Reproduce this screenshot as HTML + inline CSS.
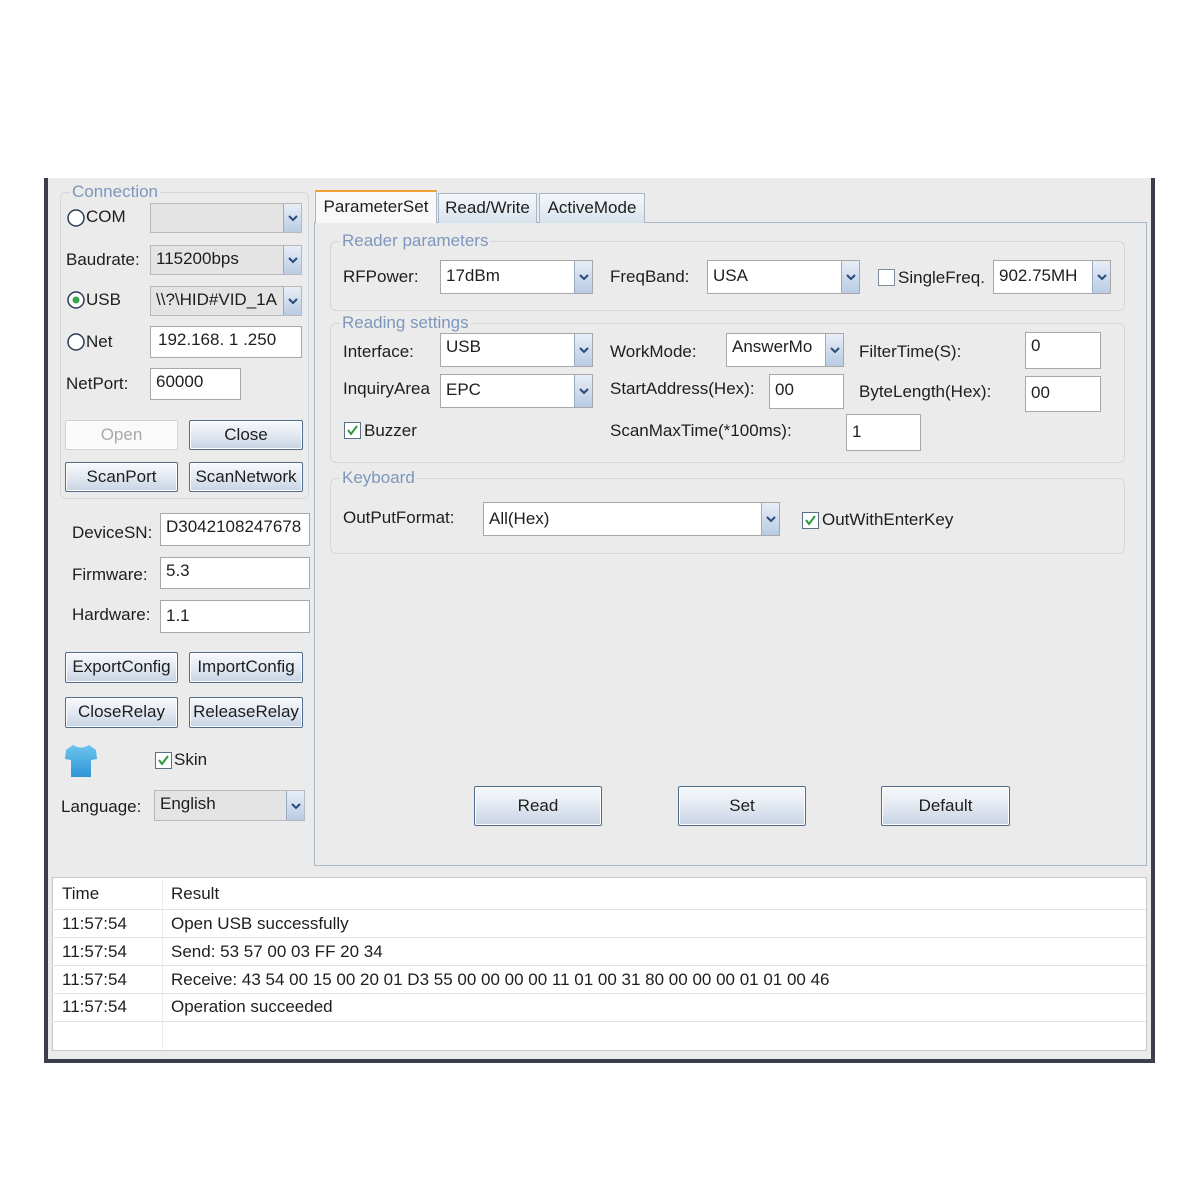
<!DOCTYPE html>
<html><head><meta charset="utf-8">
<style>
*{box-sizing:border-box;margin:0;padding:0}
body{width:1200px;height:1200px;background:#fff;position:relative;overflow:hidden;font-family:"Liberation Sans",sans-serif;font-size:17px;color:#1e1e1e}
.a{position:absolute}
.win{left:44px;top:178px;width:1111px;height:885px;background:#ebebeb;border-left:4px solid #3a3f4a;border-right:4px solid #3a3f4a;border-bottom:4px solid #3a3f4a}
.grp{position:absolute;border:1px solid #d6d6d6;border-radius:6px}
.gl{position:absolute;color:#7d97bd;background:#ebebeb;padding:0 2px;line-height:18px}
.t{position:absolute;line-height:20px;white-space:nowrap}
.in{position:absolute;background:#fff;border:1px solid #a8a8a8;padding:3px 0 0 5px;line-height:20px;white-space:nowrap;overflow:hidden}
.cb{position:absolute;background:#fff;border:1px solid #a8a8a8;padding:3px 0 0 5px;line-height:20px;white-space:nowrap;overflow:hidden}
.cb.g{background:#e4e4e4;border-color:#b8b8b8}
.dd{position:absolute;right:0;top:0;bottom:0;width:18px;background:linear-gradient(#e8eef7,#b9cbe3);border-left:1px solid #9aaac4}
.dd svg{position:absolute;left:4px;top:50%;margin-top:-4px}
.btn{position:absolute;border:1px solid #4f6c8c;border-radius:2px;background:linear-gradient(#f7f9fc 0%,#e3e9f2 50%,#c7d3e3 100%);text-align:center;line-height:28px;box-shadow:inset 0 0 0 1px #fff}
.chk{position:absolute;width:17px;height:17px;border:1px solid #5a6f88;background:#fff}
.tab{position:absolute;top:193px;height:30px;border:1px solid #a9b6c6;border-bottom:none;background:linear-gradient(#f5f8fb,#d8e2ee);line-height:28px;text-align:center}
.row{position:absolute;left:52px;width:1094px;border-bottom:1px solid #e3e3e3;height:28px}
</style></head><body>
<div class="a win"></div>

<!-- left connection group -->
<div class="grp" style="left:60px;top:192px;width:249px;height:307px"></div>
<div class="gl" style="left:70px;top:183px">Connection</div>

<svg class="a" style="left:66px;top:208px" width="20" height="20"><circle cx="10" cy="10" r="8" fill="#fff" stroke="#2a3b55" stroke-width="1.5"/></svg>
<div class="t" style="left:86px;top:207px">COM</div>
<div class="cb g" style="left:150px;top:203px;width:152px;height:30px"><div class="dd"><svg width="10" height="8"><path d="M1 2 L5 6 L9 2" fill="none" stroke="#2a4a7a" stroke-width="2"/></svg></div></div>

<div class="t" style="left:66px;top:250px">Baudrate:</div>
<div class="cb g" style="left:150px;top:245px;width:152px;height:30px">115200bps<div class="dd"><svg width="10" height="8"><path d="M1 2 L5 6 L9 2" fill="none" stroke="#2a4a7a" stroke-width="2"/></svg></div></div>

<svg class="a" style="left:66px;top:290px" width="20" height="20"><circle cx="10" cy="10" r="8" fill="#fff" stroke="#2a3b55" stroke-width="1.5"/><circle cx="10" cy="10" r="3.5" fill="#3aa84a"/></svg>
<div class="t" style="left:86px;top:290px">USB</div>
<div class="cb g" style="left:150px;top:286px;width:152px;height:30px">\\?\HID#VID_1A<div class="dd"><svg width="10" height="8"><path d="M1 2 L5 6 L9 2" fill="none" stroke="#2a4a7a" stroke-width="2"/></svg></div></div>

<svg class="a" style="left:66px;top:332px" width="20" height="20"><circle cx="10" cy="10" r="8" fill="#fff" stroke="#2a3b55" stroke-width="1.5"/></svg>
<div class="t" style="left:86px;top:332px">Net</div>
<div class="in" style="left:150px;top:326px;width:152px;height:32px;padding-left:7px">192.168. 1 .250</div>

<div class="t" style="left:66px;top:374px">NetPort:</div>
<div class="in" style="left:150px;top:368px;width:91px;height:32px">60000</div>

<div class="btn" style="left:65px;top:420px;width:113px;height:30px;background:#fafafa;border-color:#d0d0d0;color:#a8a8a8">Open</div>
<div class="btn" style="left:189px;top:420px;width:114px;height:30px">Close</div>
<div class="btn" style="left:65px;top:462px;width:113px;height:30px">ScanPort</div>
<div class="btn" style="left:189px;top:462px;width:114px;height:30px">ScanNetwork</div>

<div class="t" style="left:72px;top:523px">DeviceSN:</div>
<div class="in" style="left:160px;top:513px;width:150px;height:33px">D3042108247678</div>
<div class="t" style="left:72px;top:565px">Firmware:</div>
<div class="in" style="left:160px;top:557px;width:150px;height:32px">5.3</div>
<div class="t" style="left:72px;top:605px">Hardware:</div>
<div class="in" style="left:160px;top:600px;width:150px;height:33px;padding-top:5px">1.1</div>

<div class="btn" style="left:65px;top:652px;width:113px;height:31px">ExportConfig</div>
<div class="btn" style="left:189px;top:652px;width:114px;height:31px">ImportConfig</div>
<div class="btn" style="left:65px;top:697px;width:113px;height:31px">CloseRelay</div>
<div class="btn" style="left:189px;top:697px;width:114px;height:31px">ReleaseRelay</div>

<svg class="a" style="left:62px;top:742px" width="38" height="38"><defs><linearGradient id="sh" x1="0" y1="0" x2="0" y2="1"><stop offset="0" stop-color="#6cc4ee"/><stop offset="1" stop-color="#2f96d6"/></linearGradient></defs><path d="M11 3 L4 8 L3 17 L9 18 L9 35 L29 35 L29 18 L35 17 L34 8 L27 3 Q19 8 11 3 Z" fill="url(#sh)"/></svg>
<div class="chk" style="left:155px;top:752px"><svg width="15" height="15"><path d="M3 7 L6 11 L12 3" fill="none" stroke="#2d9a3a" stroke-width="2"/></svg></div>
<div class="t" style="left:174px;top:750px">Skin</div>

<div class="t" style="left:61px;top:797px">Language:</div>
<div class="cb g" style="left:154px;top:790px;width:151px;height:31px">English<div class="dd"><svg width="10" height="8"><path d="M1 2 L5 6 L9 2" fill="none" stroke="#2a4a7a" stroke-width="2"/></svg></div></div>

<!-- tabs -->
<div class="a" style="left:314px;top:222px;width:833px;height:644px;border:1px solid #a9b6c6;background:#ebebeb"></div>
<div class="tab" style="left:315px;width:122px;top:190px;height:33px;background:#f8f8f8;border-top:2px solid #f0a030;line-height:30px">ParameterSet</div>
<div class="tab" style="left:438px;width:99px">Read/Write</div>
<div class="tab" style="left:539px;width:106px">ActiveMode</div>

<!-- reader parameters -->
<div class="grp" style="left:330px;top:241px;width:795px;height:70px"></div>
<div class="gl" style="left:340px;top:232px">Reader parameters</div>
<div class="t" style="left:343px;top:267px">RFPower:</div>
<div class="cb" style="left:440px;top:260px;width:153px;height:34px;padding-top:5px">17dBm<div class="dd"><svg width="10" height="8"><path d="M1 2 L5 6 L9 2" fill="none" stroke="#2a4a7a" stroke-width="2"/></svg></div></div>
<div class="t" style="left:610px;top:267px">FreqBand:</div>
<div class="cb" style="left:707px;top:260px;width:153px;height:34px;padding-top:5px">USA<div class="dd"><svg width="10" height="8"><path d="M1 2 L5 6 L9 2" fill="none" stroke="#2a4a7a" stroke-width="2"/></svg></div></div>
<div class="chk" style="left:878px;top:269px;border-color:#7f8c9c"></div>
<div class="t" style="left:898px;top:268px">SingleFreq.</div>
<div class="cb" style="left:993px;top:260px;width:118px;height:34px;padding-top:5px">902.75MH<div class="dd"><svg width="10" height="8"><path d="M1 2 L5 6 L9 2" fill="none" stroke="#2a4a7a" stroke-width="2"/></svg></div></div>

<!-- reading settings -->
<div class="grp" style="left:330px;top:323px;width:795px;height:140px"></div>
<div class="gl" style="left:340px;top:314px">Reading settings</div>
<div class="t" style="left:343px;top:342px">Interface:</div>
<div class="cb" style="left:440px;top:333px;width:153px;height:34px">USB<div class="dd"><svg width="10" height="8"><path d="M1 2 L5 6 L9 2" fill="none" stroke="#2a4a7a" stroke-width="2"/></svg></div></div>
<div class="t" style="left:610px;top:342px">WorkMode:</div>
<div class="cb" style="left:726px;top:333px;width:118px;height:34px">AnswerMo<div class="dd"><svg width="10" height="8"><path d="M1 2 L5 6 L9 2" fill="none" stroke="#2a4a7a" stroke-width="2"/></svg></div></div>
<div class="t" style="left:859px;top:342px">FilterTime(S):</div>
<div class="in" style="left:1025px;top:332px;width:76px;height:37px">0</div>

<div class="t" style="left:343px;top:379px">InquiryArea</div>
<div class="cb" style="left:440px;top:374px;width:153px;height:34px;padding-top:5px">EPC<div class="dd"><svg width="10" height="8"><path d="M1 2 L5 6 L9 2" fill="none" stroke="#2a4a7a" stroke-width="2"/></svg></div></div>
<div class="t" style="left:610px;top:379px">StartAddress(Hex):</div>
<div class="in" style="left:769px;top:374px;width:75px;height:35px;padding-top:5px">00</div>
<div class="t" style="left:859px;top:382px">ByteLength(Hex):</div>
<div class="in" style="left:1025px;top:376px;width:76px;height:36px;padding-top:6px">00</div>

<div class="chk" style="left:344px;top:422px"><svg width="15" height="15"><path d="M3 7 L6 11 L12 3" fill="none" stroke="#2d9a3a" stroke-width="2"/></svg></div>
<div class="t" style="left:364px;top:421px">Buzzer</div>
<div class="t" style="left:610px;top:421px">ScanMaxTime(*100ms):</div>
<div class="in" style="left:846px;top:414px;width:75px;height:37px;padding-top:7px">1</div>

<!-- keyboard -->
<div class="grp" style="left:330px;top:478px;width:795px;height:76px"></div>
<div class="gl" style="left:340px;top:469px">Keyboard</div>
<div class="t" style="left:343px;top:508px">OutPutFormat:</div>
<div class="cb" style="left:483px;top:502px;width:297px;height:34px;padding-top:6px">All(Hex)<div class="dd"><svg width="10" height="8"><path d="M1 2 L5 6 L9 2" fill="none" stroke="#2a4a7a" stroke-width="2"/></svg></div></div>
<div class="chk" style="left:802px;top:512px"><svg width="15" height="15"><path d="M3 7 L6 11 L12 3" fill="none" stroke="#2d9a3a" stroke-width="2"/></svg></div>
<div class="t" style="left:822px;top:510px">OutWithEnterKey</div>

<div class="btn" style="left:474px;top:786px;width:128px;height:40px;line-height:38px">Read</div>
<div class="btn" style="left:678px;top:786px;width:128px;height:40px;line-height:38px">Set</div>
<div class="btn" style="left:881px;top:786px;width:129px;height:40px;line-height:38px">Default</div>

<!-- log -->
<div class="a" style="left:52px;top:877px;width:1095px;height:174px;background:#fff;border:1px solid #c8c8c8"></div>
<div class="row" style="top:877px;height:33px"></div>
<div class="a" style="left:162px;top:880px;width:1px;height:170px;background:#ececec"></div>
<div class="t" style="left:62px;top:884px">Time</div>
<div class="t" style="left:171px;top:884px">Result</div>
<div class="row" style="top:910px"></div>
<div class="row" style="top:938px"></div>
<div class="row" style="top:966px"></div>
<div class="row" style="top:994px"></div>
<div class="t" style="left:62px;top:914px">11:57:54</div><div class="t" style="left:171px;top:914px">Open USB successfully</div>
<div class="t" style="left:62px;top:942px">11:57:54</div><div class="t" style="left:171px;top:942px">Send: 53 57 00 03 FF 20 34</div>
<div class="t" style="left:62px;top:970px">11:57:54</div><div class="t" style="left:171px;top:970px">Receive: 43 54 00 15 00 20 01 D3 55 00 00 00 00 11 01 00 31 80 00 00 00 01 01 00 46</div>
<div class="t" style="left:62px;top:997px">11:57:54</div><div class="t" style="left:171px;top:997px">Operation succeeded</div>
</body></html>
